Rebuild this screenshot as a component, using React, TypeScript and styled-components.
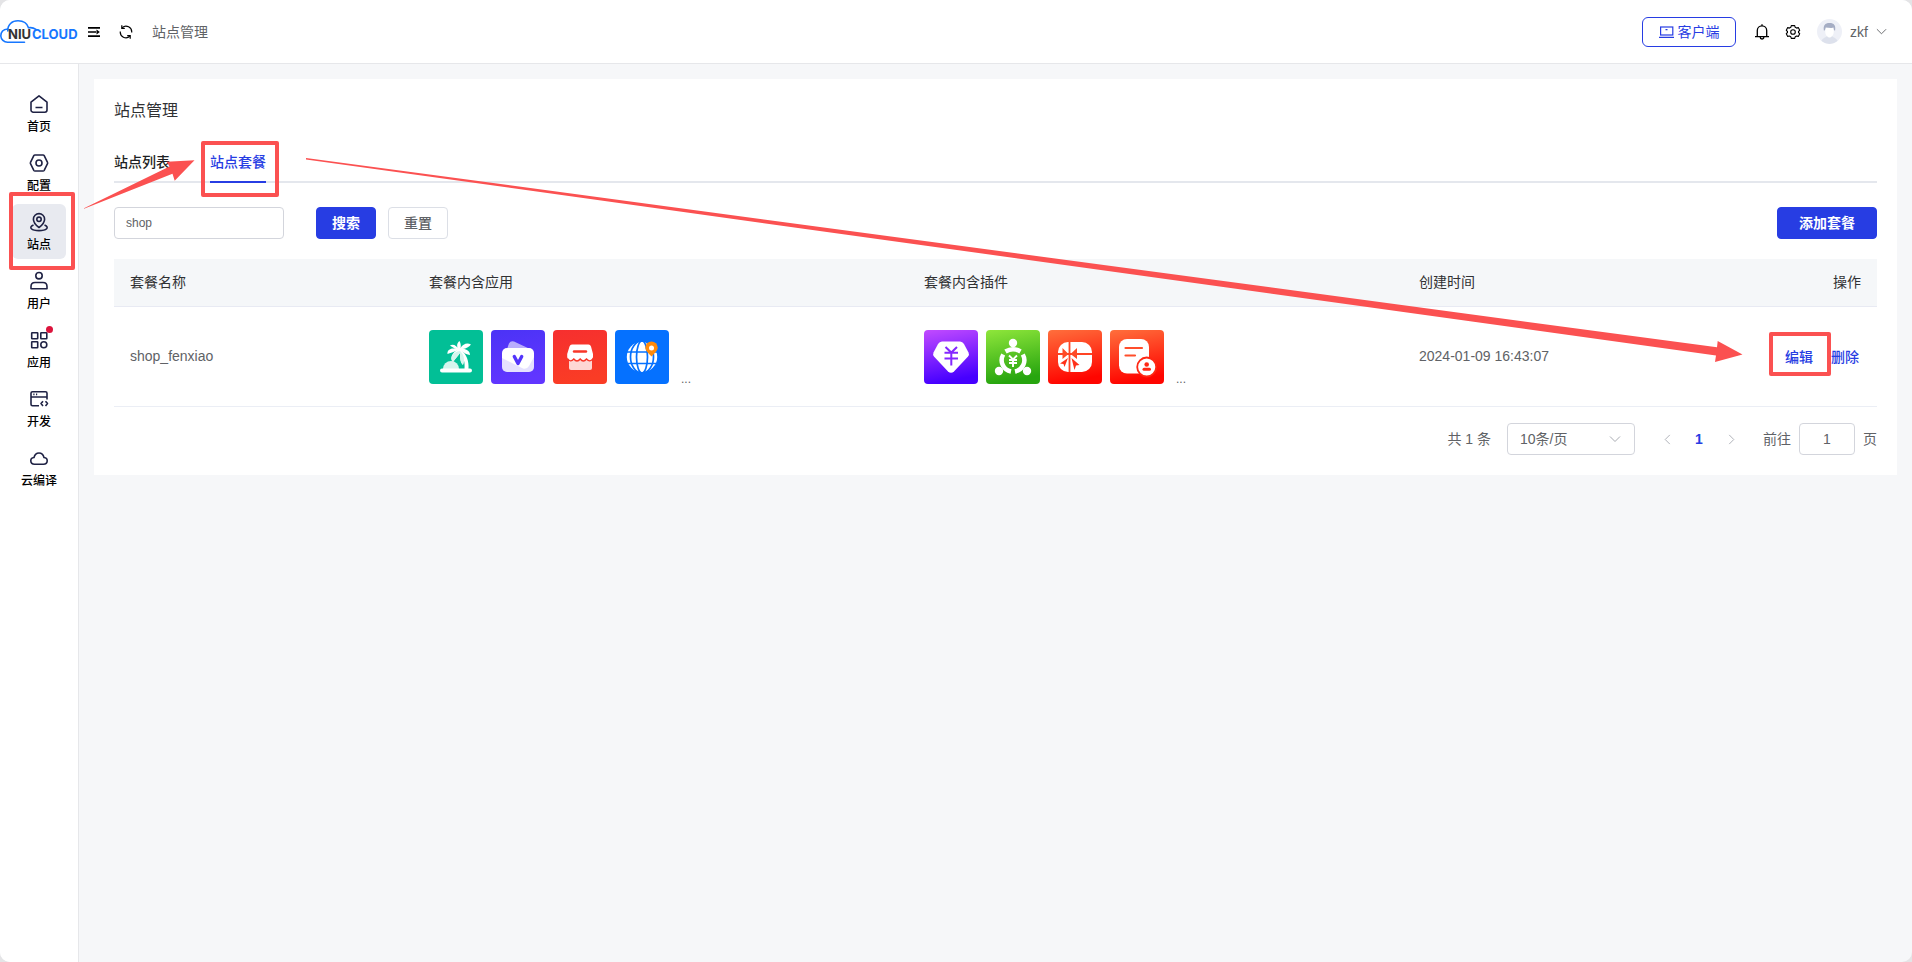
import React from "react";
import styled, { createGlobalStyle } from "styled-components";

const PRIMARY = "#273de3";
const MARK = "#fb5151";

const GlobalStyle = createGlobalStyle`
  *, *::before, *::after { box-sizing: border-box; }
  body { margin: 0; background: #e4e4e6; }
  body, button, input, select {
    font-family: "Liberation Sans", "Noto Sans CJK SC", sans-serif;
    font-size: 14px;
    color: #606266;
  }
  button { cursor: pointer; }
  svg { display: block; }
`;

const Page = styled.div`
  position: relative;
  min-height: 100vh;
  display: flex;
  flex-direction: column;
  background: #f6f7f9;
  border-radius: 10px;
  overflow: hidden;
`;

const Header = styled.header`
  display: flex;
  align-items: center;
  justify-content: space-between;
  height: 64px;
  padding-right: 25px;
  background: #fff;
  border-bottom: 1px solid #e6e7ea;
`;

const HeaderGroup = styled.div<{ $gap: number }>`
  display: flex;
  align-items: center;
  gap: ${(p) => p.$gap}px;
`;

const IconButton = styled.button`
  display: flex;
  padding: 0;
  border: 0;
  background: none;
  color: #000;
`;

const Crumb = styled.span`
  line-height: 20px;
`;

const ClientButton = styled.button`
  display: flex;
  align-items: center;
  justify-content: center;
  gap: 4px;
  width: 94px;
  height: 30px;
  padding: 0 0 2px;
  border: 1px solid ${PRIMARY};
  border-radius: 6px;
  background: #fff;
  color: ${PRIMARY};
  svg { margin-top: 2px; }
`;

const UserButton = styled.button`
  display: flex;
  align-items: center;
  gap: 8px;
  padding: 0;
  border: 0;
  background: none;
`;

const Body = styled.div`
  flex: 1;
  display: flex;
`;

const Sidebar = styled.nav`
  display: flex;
  flex-direction: column;
  align-items: center;
  gap: 4px;
  flex: 0 0 79px;
  padding-top: 22px;
  background: #fff;
  border-right: 1px solid #e6e7ea;
`;

const NavLink = styled.a<{ $active?: boolean }>`
  position: relative;
  display: flex;
  flex-direction: column;
  align-items: center;
  justify-content: center;
  gap: 4px;
  width: 54px;
  height: 55px;
  padding-top: 2px;
  border-radius: 6px;
  background: ${(p) => (p.$active ? "#e8eaf0" : "transparent")};
  color: #000;
  font-size: 12px;
  font-weight: 500;
  line-height: 18px;
  text-decoration: none;
  white-space: nowrap;
  svg { color: #1f2244; }
`;

const Badge = styled.i`
  position: absolute;
  top: 4px;
  right: 13px;
  width: 7px;
  height: 7px;
  border-radius: 50%;
  background: #dc143c;
`;

const Main = styled.main`
  flex: 1;
  min-width: 0;
  padding: 15px;
`;

const Card = styled.section`
  padding: 20px;
  background: #fff;
`;

const Title = styled.h1`
  margin: 0;
  font-size: 16px;
  font-weight: 400;
  line-height: 24px;
  color: #303133;
`;

const Tabs = styled.div`
  display: flex;
  gap: 40px;
  height: 44px;
  margin-top: 16px;
  border-bottom: 2px solid #e4e7ed;
`;

const Tab = styled.button<{ $active?: boolean }>`
  height: 44px;
  padding: 2px 0 0;
  border: 0;
  border-bottom: 2px solid ${(p) => (p.$active ? PRIMARY : "transparent")};
  background: none;
  font-weight: 500;
  color: ${(p) => (p.$active ? PRIMARY : "#1d1f23")};
`;

const Toolbar = styled.form`
  display: flex;
  align-items: center;
  gap: 12px;
  margin: 24px 0 20px;
`;

const Field = styled.input<{ $width: number }>`
  width: ${(p) => p.$width}px;
  height: 32px;
  padding: 0 11px;
  border: 1px solid #d3d5dc;
  border-radius: 4px;
  background: #fff;
  outline: none;
`;

const SearchField = styled(Field)`
  margin-right: 20px;
  font-size: 12px;
`;

const PageField = styled(Field)`
  margin: 0 8px;
  text-align: center;
`;

const Button = styled.button<{ $primary?: boolean; $width: number }>`
  width: ${(p) => p.$width}px;
  height: 32px;
  padding: 0 0 2px;
  border: 1px solid ${(p) => (p.$primary ? PRIMARY : "#dcdfe6")};
  border-radius: 4px;
  background: ${(p) => (p.$primary ? PRIMARY : "#fff")};
  color: ${(p) => (p.$primary ? "#fff" : "#606266")};
  font-weight: ${(p) => (p.$primary ? 700 : 500)};
`;

const Spacer = styled.span`
  flex: 1;
`;

const Table = styled.table`
  width: 100%;
  table-layout: fixed;
  border-collapse: separate;
  border-spacing: 0;
`;

const Col = styled.col<{ $share: number }>`
  width: ${(p) => p.$share}px;
`;

const Th = styled.th<{ $right?: boolean }>`
  height: 48px;
  padding: 0 16px 4px;
  border-bottom: 1px solid #e8eaf3;
  background: #f5f7f9;
  font-weight: 400;
  text-align: ${(p) => (p.$right ? "right" : "left")};
  color: #303133;
`;

const Td = styled.td`
  height: 100px;
  padding: 0 16px;
  border-bottom: 1px solid #ebeef5;
`;

const TextTd = styled(Td)`
  padding-bottom: 2px;
`;

const IconList = styled.div`
  display: flex;
  align-items: flex-end;
  gap: 8px;
`;

const More = styled.span`
  margin-left: 4px;
  font-size: 12px;
  line-height: 10px;
`;

const Actions = styled.div`
  display: flex;
  justify-content: flex-end;
  gap: 18px;
  padding-right: 2px;
`;

const TextButton = styled.button`
  padding: 0;
  border: 0;
  background: none;
  color: ${PRIMARY};
  font-weight: 500;
`;

const Pager = styled.div`
  display: flex;
  align-items: center;
  justify-content: flex-end;
  margin-top: 16px;
`;

const PagerText = styled.span`
  padding-bottom: 2px;
`;

const SizePicker = styled.label`
  position: relative;
  width: 128px;
  margin: 0 16px;
  svg { position: absolute; right: 14px; top: 10px; color: #a8abb2; pointer-events: none; }
`;

const Select = styled.select`
  display: block;
  width: 100%;
  height: 32px;
  padding: 0 12px;
  border: 1px solid #d3d5dc;
  border-radius: 4px;
  background: #fff;
  appearance: none;
`;

const PageButton = styled.button<{ $current?: boolean }>`
  display: flex;
  align-items: center;
  justify-content: center;
  width: 32px;
  height: 32px;
  padding: 0;
  border: 0;
  background: none;
  font-weight: ${(p) => (p.$current ? 700 : 400)};
  color: ${(p) => (p.$current ? PRIMARY : "#a8abb2")};
`;

const JumpLabel = styled.label`
  display: flex;
  align-items: center;
  margin-left: 16px;
`;

const Marks = styled.svg`
  position: absolute;
  inset: 0;
  pointer-events: none;
`;

const Logo = () => (
  <svg width="79" height="26" viewBox="0 0 79 26" role="img" aria-label="NIUCLOUD">
    <g fill="none" stroke="#1677ff" strokeWidth="1.6" strokeLinecap="round">
      <path d="M7.800 10C2 10.500 .8 14 .8 17C1 20.500 4 23.200 7.500 23.200H24.500" />
      <path d="M7.800 12C7.500 5.500 12 1.800 18 1.800C24.500 1.800 27.500 5.500 28.500 8.800C31.500 8.200 34 9 36 10.300" />
    </g>
    <text y="20" fontFamily="Inter" fontSize="13" fontWeight="700">
      <tspan x="8" fill="#333">NIU</tspan>
      <tspan x="32" fill="#1677ff">CLOUD</tspan>
    </text>
  </svg>
);

const MenuIcon = () => (
  <svg width="12" height="12" viewBox="0 0 12 12" fill="none" stroke="currentColor" strokeWidth="1.700">
    <path d="M0 1.900H12M0 6H8M0 10.200H12" />
    <path d="M8.500 3.600L11.800 6L8.500 8.400Z" fill="currentColor" stroke="none" />
  </svg>
);

const RefreshIcon = () => (
  <svg width="14" height="14" viewBox="0 0 14 14" fill="none" stroke="currentColor" strokeWidth="1.200">
    <path d="M3.200 2.700A5.700 5.700 0 0 1 12.700 7.500M10.800 11.300A5.700 5.700 0 0 1 1.300 6.500" />
    <path d="M2.800 .3V3.300H5.800M11.200 13.700V10.700H8.200" />
  </svg>
);

const LaptopIcon = () => (
  <svg width="15" height="14" viewBox="0 0 15 14" fill="none" stroke="currentColor" strokeWidth="1.200">
    <rect x="1.600" y="2" width="12.200" height="8" />
    <path d="M0 12.400H15M6.500 4.600H8.500" />
  </svg>
);

const BellIcon = () => (
  <svg width="14" height="16" viewBox="0 0 14 16" fill="none" stroke="currentColor" strokeWidth="1.300">
    <path d="M2.300 12.500V6.500A4.700 4.700 0 0 1 11.700 6.500V12.500M0 12.600H14M5.200 13.200A1.800 1.800 0 0 0 8.800 13.200M7 .3V2" />
  </svg>
);

const GearIcon = () => (
  <svg width="16" height="16" viewBox="0 0 16 16" fill="none" stroke="currentColor" strokeWidth="1.100" strokeLinejoin="round">
    <path d="M6.300 1.600H9.700L10.200 3.300L11.600 4.100L13.300 3.600L14.700 6.300L13.500 7.500V8.500L14.700 9.700L13.300 12.400L11.600 12L10.200 12.800L9.700 14.400H6.300L5.800 12.800L4.400 12L2.700 12.400L1.300 9.700L2.500 8.500V7.500L1.300 6.300L2.700 3.600L4.400 4.100L5.800 3.300Z" />
    <circle cx="8" cy="8" r="2.300" />
  </svg>
);

const Avatar = () => (
  <svg width="25" height="25" viewBox="0 0 25 25">
    <circle cx="12.500" cy="12.500" r="12.500" fill="#eef0f7" />
    <path d="M4.500 22C5.500 18.800 9 18.500 10 17H15C16 18.500 19.500 18.800 20.500 22A12.500 12.500 0 0 1 4.500 22Z" fill="#dde1ec" />
    <path d="M8.300 9H16.700V13C16.700 16 14.500 18.500 12.500 18.500S8.300 16 8.300 13Z" fill="#fff" />
    <path d="M7 12C5.800 6.500 8 4 12.500 4S19.200 6.500 18 12L16.800 10.500L16.500 8.500C14 9.500 11 8.200 8.700 8.500L8.200 10.500Z" fill="#a5adc4" />
  </svg>
);

const Chevron = ({ size = 12, turn = 0 }: { size?: number; turn?: number }) => (
  <svg width={size} height={size} viewBox="0 0 12 12" fill="none" stroke="currentColor" strokeWidth="1">
    <path d="M1 3.500L6 8.500L11 3.500" transform={`rotate(${turn} 6 6)`} />
  </svg>
);

const navShapes: Record<string, React.ReactNode> = {
  home: <path d="M2 8.200L10 1.800L18 8.200V16A2.200 2.200 0 0 1 15.800 18.200H4.200A2.200 2.200 0 0 1 2 16ZM6.500 13.500H13.500" />,
  config: (
    <>
      <path d="M6 2H14Q14.800 2 15.200 2.700L18.500 9.300Q18.900 10 18.500 10.700L15.200 17.300Q14.800 18 14 18H6Q5.200 18 4.800 17.300L1.500 10.700Q1.100 10 1.500 9.300L4.800 2.700Q5.200 2 6 2Z" />
      <circle cx="10" cy="10" r="3" />
    </>
  ),
  site: (
    <>
      <path d="M10 15.500C6 12.500 4.400 10 4.400 7.200A5.600 5.600 0 0 1 15.600 7.200C15.600 10 14 12.500 10 15.500Z" />
      <circle cx="10" cy="7.300" r="2.200" />
      <path d="M4.500 13C-1 15.500 2.500 18.600 10 18.600S21 15.500 15.500 13" />
    </>
  ),
  user: (
    <>
      <circle cx="10" cy="4.700" r="3.200" />
      <path d="M2 17.800V15.500Q2 11.500 6 11.500H14Q18 11.500 18 15.500V17.800Z" />
    </>
  ),
  app: (
    <>
      <rect x="2.700" y="2.700" width="6" height="6" rx=".5" />
      <rect x="11.800" y="2.700" width="6" height="6" rx=".5" />
      <rect x="2.700" y="11.700" width="6" height="6" rx=".5" />
      <circle cx="14.800" cy="14.700" r="3" />
    </>
  ),
  dev: (
    <>
      <path d="M10 16.800H3.500Q2 16.800 2 15.300V4.200Q2 2.700 3.500 2.700H16.500Q18 2.700 18 4.200V10.500M2 8H18M4.300 5.400H5.500M7 5.400H8.200" />
      <path d="M14 12.200L12 14.600L14 17M16.500 12.200L18.500 14.600L16.500 17" />
    </>
  ),
  cloud: <path d="M5.500 16.200C.8 16.200 .5 10 5 9.500C6.500 3.500 13.500 3.500 15 9.500C19.500 10 19.200 16.200 14.500 16.200Z" />,
};

const NavIcon = ({ name }: { name: string }) => (
  <svg width="20" height="20" viewBox="0 0 20 20" fill="none" stroke="currentColor" strokeWidth="1.600" strokeLinejoin="round">
    {navShapes[name]}
  </svg>
);

const tileArt: Record<string, { colors: [string, string]; art: React.ReactNode }> = {
  palm: {
    colors: ["#02bf96", "#02bf96"],
    art: (
      <>
        <path d="M14 39A8 8 0 0 1 30 39Z" fill="#d5f5ed" />
        <rect x="11" y="38.500" width="32" height="4" rx="2" fill="#fff" />
        <path d="M31 22C35 27 36 33 35.500 39H39.500C40 31 37.500 24 32 20Z" fill="#fff" />
        <path d="M30 20C27 16 28 13 30.500 11C32 14 32 16 31.500 18C34 14 38 12.500 42 14.500C40 17 37 18.500 34 19C38 19 41 21.500 41 25C38 24.500 35 23 33 21.500C35 25 36 29 34 35C31 32 31 27 31 23C29 26 26 29 24 32C20 28 24 22 28 20.500C25 22 21 23 18.500 24C18 20 22 17.500 27 19C24 17.500 22 16.500 21 15.500C24 13.500 28 15.500 30 20Z" fill="#fff" />
        <path d="M31 21C35 25 36 29 34 35C31 32 31 27 31 23C29 26 26 29 24 32C20 28 24 22 31 21Z" fill="#d5f5ed" />
      </>
    ),
  },
  wallet: {
    colors: ["#4b33f6", "#6136ff"],
    art: (
      <>
        <path d="M16 19L18 13.500Q19.500 10.500 23 11.500L39 19Z" fill="#fff" opacity=".6" />
        <rect x="11" y="18" width="32" height="24" rx="5" fill="#fff" />
        <path d="M11 28L32 38.500Q36 39.500 38 36L43 27V37A5 5 0 0 1 38 42H16A5 5 0 0 1 11 37Z" fill="#5335fb" opacity=".15" />
        <path d="M23.300 26.500L27 33.500L30.700 26.500" fill="none" stroke="#5335fb" strokeWidth="3.400" strokeLinecap="round" strokeLinejoin="round" />
      </>
    ),
  },
  store: {
    colors: ["#f62f2f", "#fa3c25"],
    art: (
      <>
        <path d="M16 28H39V38A2 2 0 0 1 37 40H18A2 2 0 0 1 16 38Z" fill="#fff" opacity=".8" />
        <path d="M14.200 24L16.500 16.500Q17.200 14.500 19 14.500H35.500Q37.300 14.500 38 16.500L40 24V27Q39.500 30 36.700 30Q35 30 33.500 28Q32 30 30.300 30Q28.500 30 27.200 28Q26 30 24 30Q22 30 20.800 28Q19.500 30 17.500 30Q14.500 30 14.200 27Z" fill="#fff" />
        <path d="M14.500 28.500Q17.500 33 20.800 29Q24 33 27.200 29Q30.300 33 33.500 29Q37 33 40 28.500" fill="none" stroke="#f83729" strokeWidth="1.300" />
        <path d="M21 21.500H33" stroke="#f83729" strokeWidth="2.400" strokeLinecap="round" />
      </>
    ),
  },
  globe: {
    colors: ["#0571ff", "#0571ff"],
    art: (
      <>
        <circle cx="27" cy="27" r="15.200" fill="#fff" />
        <g fill="none" stroke="#0571ff" strokeWidth="1.700">
          <path d="M10 22H44M10 33.500H44" strokeWidth="1.300" />
          <ellipse cx="27" cy="27" rx="5.500" ry="16" />
          <ellipse cx="27" cy="27" rx="11.500" ry="16" />
        </g>
        <path d="M36.500 26.500C32.500 22.500 30.300 20.300 30.300 17.600A6.200 6.200 0 0 1 42.700 17.600C42.700 20.300 40.500 22.500 36.500 26.500Z" fill="#ff8a0a" />
        <circle cx="36.500" cy="18" r="2.500" fill="#fff" />
      </>
    ),
  },
  gem: {
    colors: ["#c24bff", "#4600ff"],
    art: (
      <>
        <path d="M18 11.500H36Q38.500 11.500 40 14L44.500 22.500Q45.500 24.500 44 26.500L30 41.500Q27 44 24 41.500L10 26.500Q8.500 24.500 9.500 22.500L14 14Q15.500 11.500 18 11.500Z" fill="#fff" />
        <path d="M21.500 17L27.300 22.500L33 17M20.500 22.800H34M20.500 28.500H34M27.300 22.500V35.500" fill="none" stroke="#8427ff" strokeWidth="2" />
      </>
    ),
  },
  team: {
    colors: ["#8fe63b", "#27a50f"],
    art: (
      <>
        <g fill="#fff">
          <circle cx="27" cy="13" r="4.200" />
          <circle cx="13" cy="41" r="4.200" />
          <circle cx="41" cy="41" r="4.200" />
        </g>
        <g fill="none" stroke="#fff" strokeWidth="4.500">
          <path d="M19.500 21.500Q27 17 34.500 21.500" />
          <path d="M17.200 24.500A11.500 11.500 0 0 0 25 41.500M36.800 24.500A11.500 11.500 0 0 1 29 41.500" />
        </g>
        <path d="M23 25.500L27 29.500L31 25.500M23 30H31M23 33H31M27 29.500V37" fill="none" stroke="#fff" strokeWidth="1.900" />
      </>
    ),
  },
  gift: {
    colors: ["#ff6f3c", "#ff0500"],
    art: (
      <>
        <rect x="10" y="12" width="34" height="30" rx="10" fill="#fff" />
        <path d="M10 24H44M21.500 12V42" stroke="#ff4424" strokeWidth="1.800" />
        <path d="M20.500 24L14.500 18V29ZM22.500 24L29 18V29Z" fill="#ff4a26" />
        <path d="M20 28L12 33.500L15.500 34L16.500 37ZM23.500 28L31.500 35L28 35.500L26.500 40Z" fill="#ff3018" />
      </>
    ),
  },
  record: {
    colors: ["#ff6f3c", "#ff0500"],
    art: (
      <>
        <rect x="9" y="9" width="30" height="34.500" rx="8" fill="#fff" />
        <path d="M15.500 18H32M15.500 25.500H25" stroke="#ff4e2b" strokeWidth="2.200" strokeLinecap="round" />
        <circle cx="36.700" cy="37" r="9.500" fill="#fff" stroke="#ff2814" strokeWidth="1.800" />
        <circle cx="36.700" cy="34.500" r="2.300" fill="#ff2814" />
        <rect x="32.500" y="37.800" width="8.500" height="3" rx="1.500" fill="#ff2814" />
      </>
    ),
  },
};

const Tile = ({ name }: { name: string }) => {
  const { colors, art } = tileArt[name];
  return (
    <svg width="54" height="54" viewBox="0 0 54 54">
      <defs>
        <linearGradient id={`tile-${name}`} x1="0" y1="0" x2=".2" y2="1">
          <stop offset="0" stopColor={colors[0]} />
          <stop offset="1" stopColor={colors[1]} />
        </linearGradient>
      </defs>
      <rect width="54" height="54" rx="4" fill={`url(#tile-${name})`} />
      {art}
    </svg>
  );
};

const Tiles = ({ names }: { names: string[] }) => (
  <IconList>
    {names.map((n) => (
      <Tile key={n} name={n} />
    ))}
    <More>...</More>
  </IconList>
);

const navItems = [
  { icon: "home", label: "首页" },
  { icon: "config", label: "配置" },
  { icon: "site", label: "站点", active: true },
  { icon: "user", label: "用户" },
  { icon: "app", label: "应用", badge: true },
  { icon: "dev", label: "开发" },
  { icon: "cloud", label: "云编译" },
];

export default function App() {
  return (
    <>
      <GlobalStyle />
      <Page>
        <Header>
          <HeaderGroup $gap={19}>
            <HeaderGroup $gap={9}>
              <Logo />
              <IconButton aria-label="菜单"><MenuIcon /></IconButton>
            </HeaderGroup>
            <HeaderGroup $gap={19}>
              <IconButton aria-label="刷新"><RefreshIcon /></IconButton>
              <Crumb>站点管理</Crumb>
            </HeaderGroup>
          </HeaderGroup>
          <HeaderGroup $gap={16}>
            <HeaderGroup $gap={19}>
              <ClientButton><LaptopIcon />客户端</ClientButton>
              <IconButton aria-label="通知"><BellIcon /></IconButton>
            </HeaderGroup>
            <IconButton aria-label="设置"><GearIcon /></IconButton>
            <UserButton><Avatar />zkf<Chevron size={11} /></UserButton>
          </HeaderGroup>
        </Header>
        <Body>
          <Sidebar>
            {navItems.map((item) => (
              <NavLink key={item.icon} href="#" $active={item.active}>
                <NavIcon name={item.icon} />
                {item.label}
                {item.badge && <Badge />}
              </NavLink>
            ))}
          </Sidebar>
          <Main>
            <Card>
              <Title>站点管理</Title>
              <Tabs>
                <Tab>站点列表</Tab>
                <Tab $active>站点套餐</Tab>
              </Tabs>
              <Toolbar onSubmit={(e) => e.preventDefault()}>
                <SearchField $width={170} aria-label="套餐名称" defaultValue="shop" />
                <Button $primary $width={60}>搜索</Button>
                <Button type="reset" $width={60}>重置</Button>
                <Spacer />
                <Button type="button" $primary $width={100}>添加套餐</Button>
              </Toolbar>
              <Table>
                <colgroup>
                  <Col $share={299} />
                  <Col $share={495} />
                  <Col $share={495} />
                  <Col $share={299} />
                  <Col $share={175} />
                </colgroup>
                <thead>
                  <tr>
                    <Th>套餐名称</Th>
                    <Th>套餐内含应用</Th>
                    <Th>套餐内含插件</Th>
                    <Th>创建时间</Th>
                    <Th $right>操作</Th>
                  </tr>
                </thead>
                <tbody>
                  <tr>
                    <TextTd>shop_fenxiao</TextTd>
                    <Td><Tiles names={["palm", "wallet", "store", "globe"]} /></Td>
                    <Td><Tiles names={["gem", "team", "gift", "record"]} /></Td>
                    <TextTd>2024-01-09 16:43:07</TextTd>
                    <TextTd>
                      <Actions>
                        <TextButton>编辑</TextButton>
                        <TextButton>删除</TextButton>
                      </Actions>
                    </TextTd>
                  </tr>
                </tbody>
              </Table>
              <Pager>
                <PagerText>共 1 条</PagerText>
                <SizePicker>
                  <Select aria-label="每页条数"><option>10条/页</option></Select>
                  <Chevron />
                </SizePicker>
                <PageButton aria-label="上一页"><Chevron size={11} turn={90} /></PageButton>
                <PageButton $current>1</PageButton>
                <PageButton aria-label="下一页"><Chevron size={11} turn={-90} /></PageButton>
                <JumpLabel>
                  <PagerText>前往</PagerText>
                  <PageField $width={56} defaultValue="1" />
                  <PagerText>页</PagerText>
                </JumpLabel>
              </Pager>
            </Card>
          </Main>
        </Body>
        <Marks width="100%" height="100%" aria-hidden="true">
          <g fill="none" stroke={MARK} strokeWidth="4" strokeLinejoin="round">
            <rect x="11" y="194" width="62" height="74" />
            <rect x="203" y="143" width="74" height="52" />
            <rect x="1771" y="334" width="58" height="40" />
          </g>
          <g fill={MARK}>
            <path d="M84 208.300L169.500 166.500L166.700 161.700L194.500 160.300L174.700 180.700L172.500 173.700L84 208.700Z" />
            <path d="M306 158L1717 347.300L1717.700 341L1742.500 354.500L1715 362L1716 355.500L306 159.500Z" />
          </g>
        </Marks>
      </Page>
    </>
  );
}
